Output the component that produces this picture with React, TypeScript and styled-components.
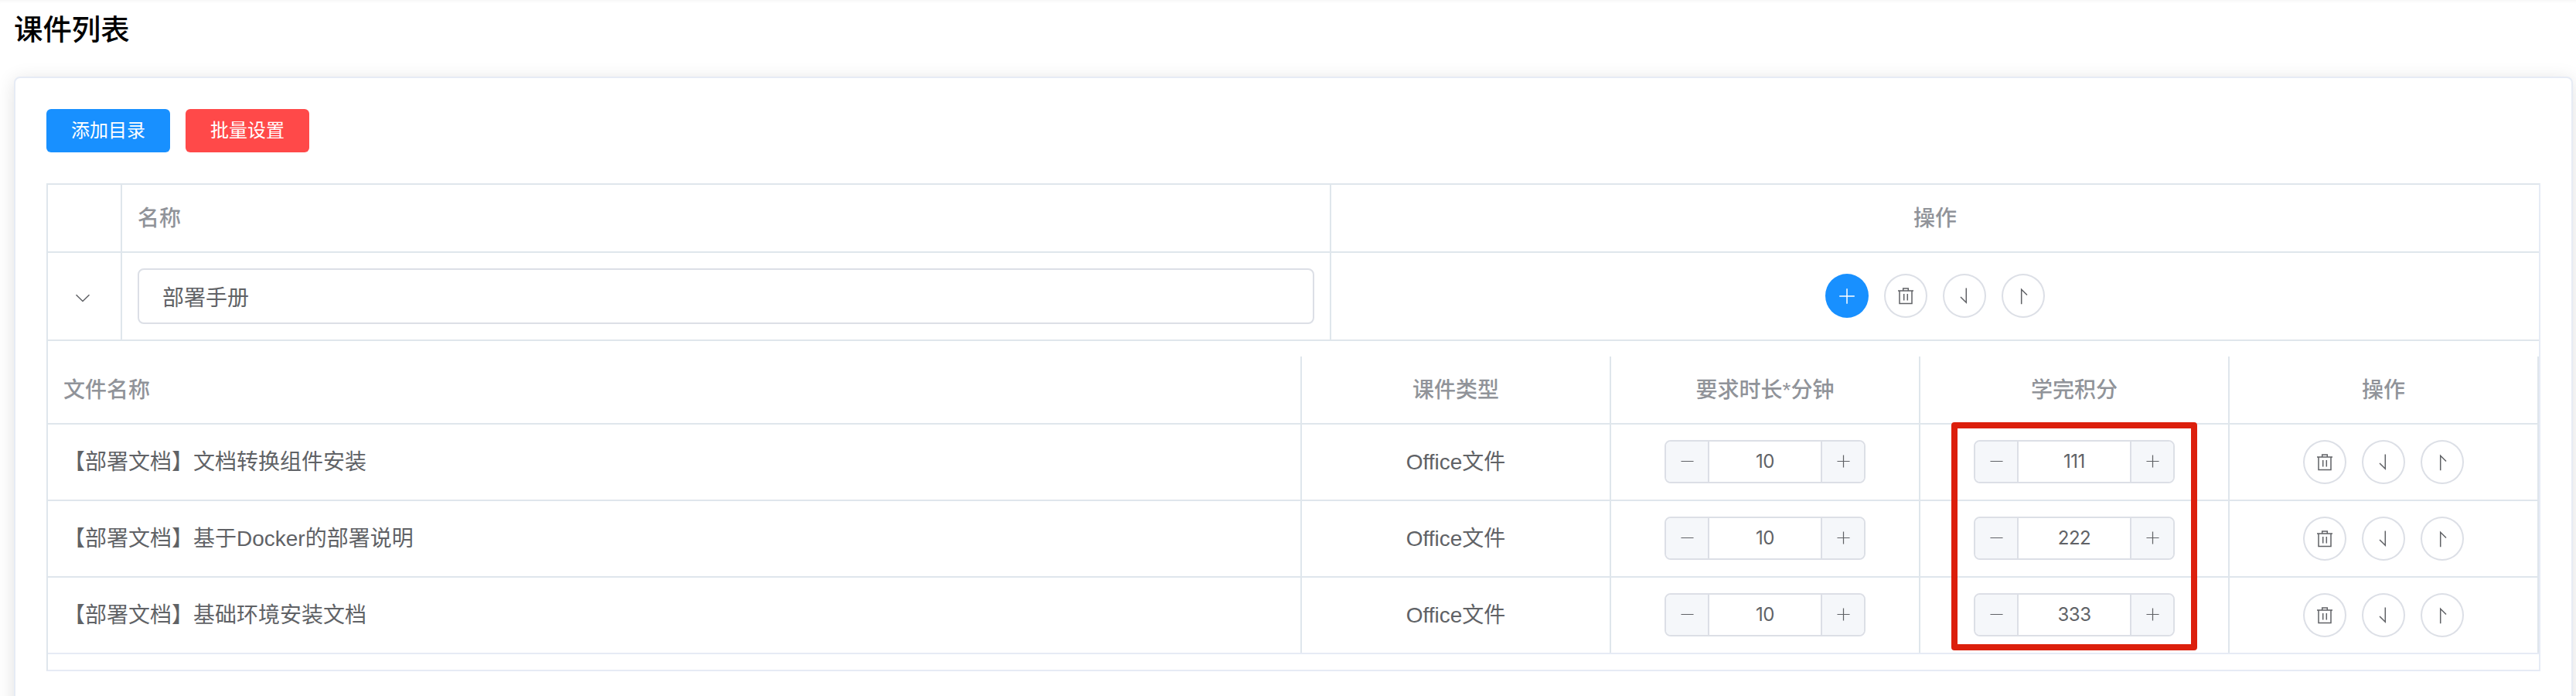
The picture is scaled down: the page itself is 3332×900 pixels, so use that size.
import React from "react";
import styled, { createGlobalStyle } from "styled-components";

const files = [
	{ name: "【部署文档】文档转换组件安装", type: "Office文件", minutes: 10, score: 111 },
	{ name: "【部署文档】基于Docker的部署说明", type: "Office文件", minutes: 10, score: 222 },
	{ name: "【部署文档】基础环境安装文档", type: "Office文件", minutes: 10, score: 333 },
];

const PlusIcon = ({ size }: { size: number }) => (
	<Icon $size={size} viewBox="0 0 28 28">
		<path d="M14 4.2V23.8M4.2 14H23.8" />
	</Icon>
);

const MinusIcon = ({ size }: { size: number }) => (
	<Icon $size={size} viewBox="0 0 28 28">
		<path d="M4.2 14H23.8" />
	</Icon>
);

const TrashIcon = () => (
	<Icon $size={24} viewBox="0 0 24 24">
		<path d="M2 5H22M4 5V21.5H20V5M8.7 5V2H15.3V5M9.7 9V17.5M14.3 9V17.5" />
	</Icon>
);

const DownIcon = () => (
	<Icon $size={24} viewBox="0 0 24 24">
		<path d="M14.3 1.5V20.3L7 13" />
	</Icon>
);

const UpIcon = () => (
	<Icon $size={24} viewBox="0 0 24 24">
		<path d="M9.7 22.2V3.2L17 10.5" />
	</Icon>
);

const ChevronIcon = () => (
	<Icon $size={24} viewBox="0 0 24 24">
		<path d="M3.5 8.2L12 16.5L20.5 8.2" />
	</Icon>
);

const Stepper = ({ value }: { value: number }) => (
	<StepperBox>
		<StepButton $side="left"><MinusIcon size={23} /></StepButton>
		<StepValue>{value}</StepValue>
		<StepButton $side="right"><PlusIcon size={23} /></StepButton>
	</StepperBox>
);

const Actions = ({ withAdd }: { withAdd?: boolean }) => (
	<ActionGroup $raised={withAdd}>
		{withAdd && <CircleButton $primary><PlusIcon size={28} /></CircleButton>}
		<CircleButton><TrashIcon /></CircleButton>
		<CircleButton><DownIcon /></CircleButton>
		<CircleButton><UpIcon /></CircleButton>
	</ActionGroup>
);

export default function App() {

	return (
		<Page>
			<GlobalStyle />
			<Title>课件列表</Title>
			<Card>
				<Toolbar>
					<Button $color="#1890ff">添加目录</Button>
					<Button $color="#ff4949">批量设置</Button>
				</Toolbar>
				<Table>
					<Row $height={88}>
						<Cell />
						<HeadCell>名称</HeadCell>
						<HeadCell $center>操作</HeadCell>
					</Row>
					<Row $height={114}>
						<ExpandCell $center><ChevronIcon /></ExpandCell>
						<Cell><NameInput defaultValue="部署手册" /></Cell>
						<Cell $center><Actions withAdd /></Cell>
					</Row>
					<Expanded>
						<FileRow $height={88}>
							<HeadCell>文件名称</HeadCell>
							<HeadCell $center>课件类型</HeadCell>
							<HeadCell $center>要求时长*分钟</HeadCell>
							<HeadCell $center>学完积分</HeadCell>
							<HeadCell $center>操作</HeadCell>
						</FileRow>
						{files.map((file) => (
							<FileRow key={file.name} $height={99}>
								<Cell>{file.name}</Cell>
								<Cell $center>{file.type}</Cell>
								<Cell $center><Stepper value={file.minutes} /></Cell>
								<Cell $center><Stepper value={file.score} /></Cell>
								<Cell $center><Actions /></Cell>
							</FileRow>
						))}
						<Highlight />
					</Expanded>
				</Table>
			</Card>
		</Page>
	)
}

const GlobalStyle = createGlobalStyle`
	* {
		box-sizing: border-box;
	}

	body {
		margin: 0;
		background: #fff;
		font-family: "Liberation Sans", "Noto Sans CJK SC", sans-serif;
		font-size: 28px;
		color: #606266;
	}
`;

const Page = styled.div`
	height: 900px;
	padding: 0 4px 0 18px;
	overflow: hidden;
	box-shadow: inset 0 4px 4px -3px rgba(0, 0, 0, 0.05);
`;

const Title = styled.h3`
	height: 99px;
	margin: 0;
	padding-top: 13px;
	font-size: 37.44px;
	font-weight: 500;
	line-height: 52px;
	color: #000;
`;

const Card = styled.div`
	height: 900px;
	padding: 40px;
	border: 2px solid #e6ebf5;
	border-radius: 8px;
	background: #fff;
	box-shadow: 0 4px 24px rgba(0, 0, 0, 0.12);
`;

const Toolbar = styled.div`
	display: flex;
	gap: 20px;
	margin-bottom: 40px;
`;

const Button = styled.button<{ $color: string }>`
	width: 160px;
	height: 56px;
	padding: 0;
	border: none;
	border-radius: 6px;
	background: ${({ $color }) => $color};
	color: #fff;
	font-family: inherit;
	font-size: 24px;
	line-height: 56px;
`;

const Table = styled.div`
	border: 2px solid #dfe6ec;
	border-right-color: #e6ebf5;
	border-bottom-color: #e6ebf5;
`;

const Row = styled.div<{ $height: number }>`
	display: grid;
	grid-template-columns: 96px 1564px 1fr;
	height: ${({ $height }) => $height}px;
	border-bottom: 2px solid #dfe6ec;

	& > :last-child {
		border-right: none;
	}
`;

const FileRow = styled(Row)`
	grid-template-columns: 1fr 400px 400px 400px 400px;

	&:nth-child(4) {
		border-bottom-color: #e6ebf5;
	}

	& > :last-child {
		border-right: 2px solid #dfe6ec;
	}
`;

const Cell = styled.div<{ $center?: boolean }>`
	display: flex;
	align-items: center;
	justify-content: ${({ $center }) => ($center ? "center" : "flex-start")};
	min-width: 0;
	padding: 0 20px;
	border-right: 2px solid #dfe6ec;
	line-height: 46px;
`;

const HeadCell = styled(Cell)`
	padding-top: 2px;
	color: #909399;
	font-weight: 500;
`;

const ExpandCell = styled(Cell)`
	padding: 3px 24px 0 20px;
`;

const NameInput = styled.input`
	width: 100%;
	height: 72px;
	padding: 0 30px;
	border: 2px solid #dcdfe6;
	border-radius: 8px;
	outline: none;
	background: #fff;
	color: #606266;
	font-family: inherit;
	font-size: 28px;
`;

const Expanded = styled.div`
	position: relative;
	padding: 20px 0;
`;

const ActionGroup = styled.div<{ $raised?: boolean }>`
	display: flex;
	gap: 20px;
	margin-bottom: ${({ $raised }) => ($raised ? 1 : 0)}px;
`;

const CircleButton = styled.button<{ $primary?: boolean }>`
	display: flex;
	align-items: center;
	justify-content: center;
	width: 56px;
	height: 57px;
	padding: 0;
	border: 2px solid ${({ $primary }) => ($primary ? "#1890ff" : "#dcdfe6")};
	border-radius: 50%;
	background: ${({ $primary }) => ($primary ? "#1890ff" : "#fff")};
	color: ${({ $primary }) => ($primary ? "#fff" : "#606266")};
`;

const StepperBox = styled.div`
	display: flex;
	width: 260px;
	height: 56px;
	margin-bottom: 1px;
	border: 2px solid #dcdfe6;
	border-radius: 8px;
	overflow: hidden;
`;

const StepButton = styled.div<{ $side: "left" | "right" }>`
	display: flex;
	align-items: center;
	justify-content: center;
	width: 56px;
	padding-bottom: 2px;
	background: #f5f7fa;
	color: #606266;
	border-${({ $side }) => ($side === "left" ? "right" : "left")}: 2px solid #dcdfe6;
`;

const StepValue = styled.div`
	flex: 1;
	font-family: Inter, sans-serif;
	font-size: 24px;
	line-height: 52px;
	letter-spacing: -0.5px;
	text-align: center;
`;

const Icon = styled.svg<{ $size: number }>`
	width: ${({ $size }) => $size}px;
	height: ${({ $size }) => $size}px;
	fill: none;
	stroke: currentColor;
	stroke-width: 1.5;
`;

/* red frame drawn over the score column */
const Highlight = styled.div`
	position: absolute;
	top: 105px;
	right: 442px;
	width: 318px;
	height: 295px;
	border: 8px solid #dc1f0c;
	border-radius: 4px;
`;
